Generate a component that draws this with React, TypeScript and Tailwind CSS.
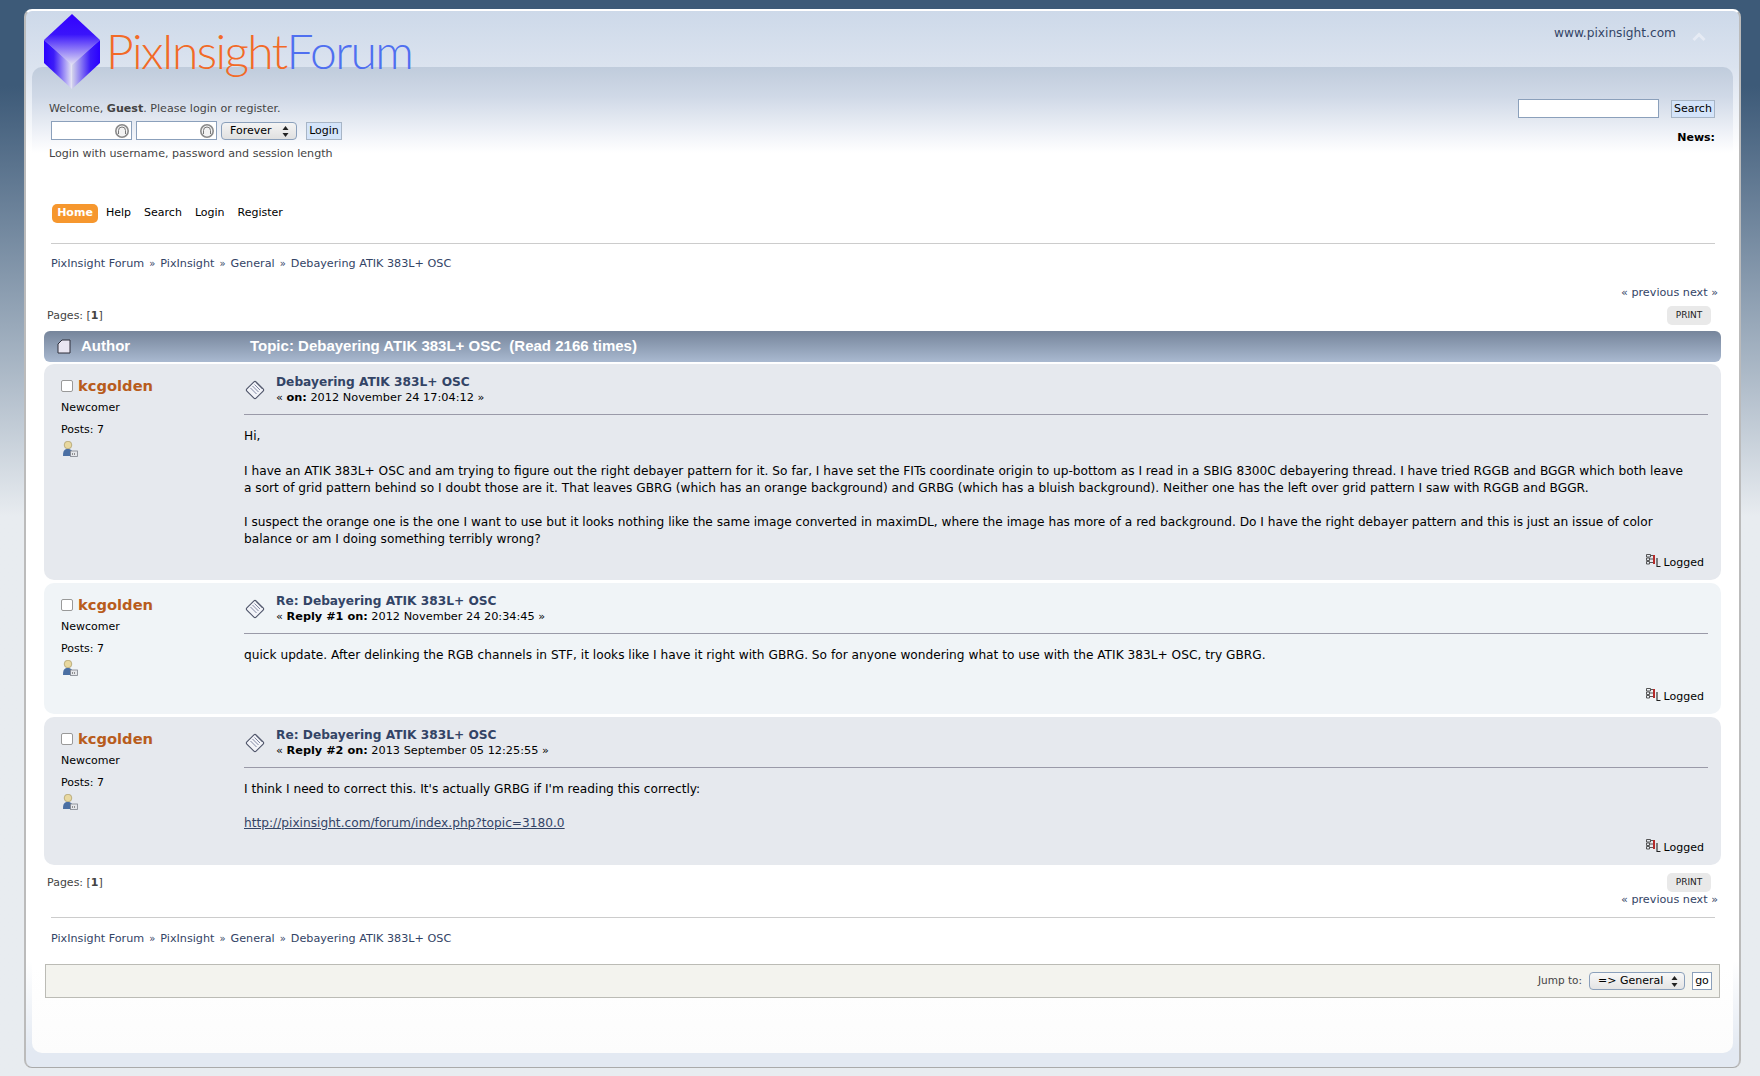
import React from 'react'

const posts = [
    {
        title: 'Debayering ATIK 383L+ OSC',
        label: 'on:',
        date: '2012 November 24 17:04:12',
        bg: 'bg-[#e6e9ee]',
        h: 'h-[216px]',
        body: (
            <>
                <p>Hi,</p>
                <p className="mt-[18px]">
                    I have an ATIK 383L+ OSC and am trying to figure out the right debayer pattern for it. So far, I have set the FITs coordinate origin to up-bottom as I read in a SBIG 8300C debayering thread. I have tried RGGB and BGGR which both leave a sort of grid pattern behind so I doubt those are it. That leaves GBRG (which has an orange background) and GRBG (which has a bluish background). Neither one has the left over grid pattern I saw with RGGB and BGGR.
                </p>
                <p className="mt-[17px]">
                    I suspect the orange one is the one I want to use but it looks nothing like the same image converted in maximDL, where the image has more of a red background. Do I have the right debayer pattern and this is just an issue of color balance or am I doing something terribly wrong?
                </p>
            </>
        ),
    },
    {
        title: 'Re: Debayering ATIK 383L+ OSC',
        label: 'Reply #1 on:',
        date: '2012 November 24 20:34:45',
        bg: 'bg-[#f0f4f7]',
        h: 'h-[131px]',
        body: (
            <p>
                quick update. After delinking the RGB channels in STF, it looks like I have it right with GBRG. So for anyone wondering what to use with the ATIK 383L+ OSC, try GBRG.
            </p>
        ),
    },
    {
        title: 'Re: Debayering ATIK 383L+ OSC',
        label: 'Reply #2 on:',
        date: '2013 September 05 12:25:55',
        bg: 'bg-[#e6e9ee]',
        h: 'h-[148px]',
        body: (
            <>
                <p>I think I need to correct this. It's actually GRBG if I'm reading this correctly:</p>
                <p className="mt-[17px]">
                    <a className="text-[#334466] underline">http://pixinsight.com/forum/index.php?topic=3180.0</a>
                </p>
            </>
        ),
    },
]

function Cube() {
    return (
        <svg width="57" height="75" viewBox="0 0 57 75" className="shrink-0">
            <defs>
                <linearGradient id="top" x1="0" y1="0" x2="0" y2="1">
                    <stop offset="0" stopColor="#3300ff" />
                    <stop offset="0.4" stopColor="#3a14fb" />
                    <stop offset="1" stopColor="#e4e2f4" />
                </linearGradient>
                <linearGradient id="left" x1="0" y1="0" x2="1" y2="0">
                    <stop offset="0" stopColor="#2a00ff" />
                    <stop offset="0.35" stopColor="#3c1cf8" />
                    <stop offset="1" stopColor="#e8e8f4" />
                </linearGradient>
                <linearGradient id="right" x1="1" y1="0" x2="0" y2="0">
                    <stop offset="0" stopColor="#2a00ff" />
                    <stop offset="0.35" stopColor="#3c1cf8" />
                    <stop offset="1" stopColor="#d4d4ec" />
                </linearGradient>
            </defs>
            <path d="M28 0 L56 26 L28 51 L0 26 Z" fill="url(#top)" />
            <path d="M0 26 L28 51 L28 75 L0 49 Z" fill="url(#left)" />
            <path d="M56 26 L28 51 L28 75 L56 49 Z" fill="url(#right)" />
        </svg>
    )
}

function OpenIdIcon() {
    return (
        <svg width="16" height="16" viewBox="0 0 16 16" className="absolute right-[2px] top-[2px]">
            <circle cx="8" cy="8" r="6.200" fill="#f2f2f2" stroke="#8a8a8a" strokeWidth="1.600" />
            <path d="M4.500 11 V7.500 a3.500 3.500 0 0 1 7 0 V11" fill="none" stroke="#777" strokeWidth="1" />
        </svg>
    )
}

function Arrows() {
    return (
        <svg width="7" height="11" viewBox="0 0 7 11" className="shrink-0">
            <path d="M3.500 0 L6.500 4 H0.500 Z M3.500 11 L0.500 7 H6.500 Z" fill="#222" />
        </svg>
    )
}

function PostIcon() {
    return (
        <svg width="22" height="22" viewBox="0 0 22 22" className="shrink-0">
            <rect x="4.500" y="4.500" width="13" height="13" rx="1.500" transform="rotate(45 11 11)" fill="#f3f4f9" stroke="#4f556a" strokeWidth="1.100" />
            <path d="M12 3.500 L18.500 10" fill="none" stroke="#4f556a" strokeWidth="1" />
            <path d="M6.500 9 L12.500 15 M8.500 7 L14.500 13 M10.500 5.500 L16 11" stroke="#8188a3" strokeWidth="1" />
        </svg>
    )
}

function ProfileIcon() {
    return (
        <svg width="16" height="16" viewBox="0 0 16 16" className="block">
            <circle cx="6" cy="4" r="3.800" fill="#e8d8a0" stroke="#a89a66" strokeWidth="0.700" />
            <path d="M1 15 C1 9.500 2.500 8 6 8 C9.500 8 11 10 11 15 Z" fill="#4a6fa3" />
            <rect x="8.500" y="10" width="7" height="5.500" fill="#e4e6ea" stroke="#7f838c" strokeWidth="0.800" />
            <path d="M10.500 12 V14 M12.500 12 V14" stroke="#777" strokeWidth="0.800" />
        </svg>
    )
}

function LoggedIcon() {
    return (
        <svg width="15" height="14" viewBox="0 0 15 14" className="mb-[3px] shrink-0">
            <path d="M0.500 0.500 H4.500 V3 H0.500 Z M0.500 4 H3.500 V6.500 H0.500 Z M0.500 7.500 H3.500 V10 H0.500 Z M5 1.500 H7 M4 5 H7 M4 8.500 H7" fill="none" stroke="#444" strokeWidth="0.900" />
            <rect x="7" y="1" width="2" height="9" fill="#b52a2a" />
            <path d="M11 4 V12.500 H14.500" fill="none" stroke="#222" strokeWidth="1.100" />
        </svg>
    )
}

function PrintButton() {
    return (
        <span className="flex h-[19px] w-[44px] items-center justify-center rounded-[5px] bg-[#e9e9e9] text-[9px] text-[#222]">
            PRINT
        </span>
    )
}

function Pages() {
    return (
        <span className="block pt-[1px] text-[11px] leading-[18px] text-[#444]">
            Pages: [<b>1</b>]
        </span>
    )
}

function Crumbs() {
    return (
        <div className="flex gap-[5px] pl-[6px] text-[11.200px] text-[#334466]">
            <span>PixInsight Forum</span>
            <span className="text-[10px] leading-[16px]">»</span>
            <span>PixInsight</span>
            <span className="text-[10px] leading-[16px]">»</span>
            <span>General</span>
            <span className="text-[10px] leading-[16px]">»</span>
            <span>Debayering ATIK 383L+ OSC</span>
        </div>
    )
}

function Post({ post }: { post: (typeof posts)[number] }) {
    return (
        <div className={`flex ${post.h} ${post.bg} mb-[3px] rounded-[10px]`}>
            <div className="w-[200px] shrink-0 pl-[17px] pt-[11px] text-[11px] text-black">
                <div className="flex items-center gap-[5px]">
                    <span className="h-[12px] w-[12px] rounded-[2px] border border-[#999] bg-white" />
                    <span className="text-[14.700px] font-bold leading-[22px] text-[#b85c1c]">kcgolden</span>
                </div>
                <p className="mt-[3px] leading-[16px]">Newcomer</p>
                <p className="mt-[6px] leading-[16px]">Posts: 7</p>
                <div className="ml-[1px] mt-[3px]">
                    <ProfileIcon />
                </div>
            </div>
            <div className="flex min-w-0 flex-1 flex-col pr-[13px] pt-[10px]">
                <div className="flex h-[41px] items-start border-b border-[#9a9aa8]">
                    <div className="mt-[5px] w-[32px]">
                        <PostIcon />
                    </div>
                    <div>
                        <p className="text-[12.200px] font-bold leading-[16px] text-[#334466]">{post.title}</p>
                        <p className="text-[11.300px] leading-[16px] text-black">
                            « <b>{post.label}</b> {post.date} »
                        </p>
                    </div>
                </div>
                <div className="mt-[13px] flex-1 pr-[15px] text-[12.180px] leading-[17px] text-black">{post.body}</div>
                <div className="flex items-end justify-end gap-[3px] pb-[9px] pr-[4px] text-[11px] text-black">
                    <LoggedIcon />
                    <span>Logged</span>
                </div>
            </div>
        </div>
    )
}

export default function App() {
    return (
        <div className="min-h-[1076px] bg-gradient-to-b from-[#3d5a78] from-[8%] to-[#e8ecf0] to-[48%] pb-[8px] pl-[24px] pr-[19px] pt-[9px] font-['DejaVu_Sans',sans-serif]">
            <div className="flex h-[1059px] flex-col rounded-[8px] border-2 border-b border-white border-b-[#aaa] border-l-[#bbb] border-r-[#bbb] bg-[linear-gradient(#cdd9e9,#dbe3ef_56px,#ffffff_140px,#ffffff_950px,#e3e9f2_1040px)]">
                {/* top strip with logo */}
                <div className="relative h-[56px] shrink-0">
                    <div className="absolute left-[18px] top-[3px] z-10 flex items-start gap-[5px]">
                        <Cube />
                        <div className="mt-[7px] whitespace-nowrap font-['Lato',sans-serif] text-[48px] font-light leading-[60px] tracking-[-1.650px]">
                            <span className="text-[#f26a27]">PixInsight</span>
                            <span className="text-[#4f6ff0]">Forum</span>
                        </div>
                    </div>
                    <div className="flex items-start justify-end pr-[33px] pt-[13px]">
                        <span className="text-[12.200px] text-[#334466]">www.pixinsight.com</span>
                        <svg width="14" height="10" viewBox="0 0 14 10" className="ml-[16px] mt-[8px]">
                            <path d="M1.500 8 L7 2.500 L12.500 8" fill="none" stroke="#e6ebf4" strokeWidth="3" />
                        </svg>
                    </div>
                </div>

                <div className="mx-[6px] mb-[14px] flex min-h-0 flex-1 flex-col rounded-[10px] bg-[linear-gradient(#c0ccdc,#d0d9e7_30px,#f4f6fa_72px,#ffffff_86px,#ffffff_900px,#fcfcfc)]">
                    <div className="flex h-[137px] shrink-0 justify-between pl-[17px] pr-[18px] pt-[34px]">
                        <div className="text-[11.100px] text-[#444]">
                            <p className="leading-[16px]">
                                Welcome, <b>Guest</b>. Please login or register.
                            </p>
                            <div className="ml-[2px] mt-[4px] flex items-end">
                                <div className="relative h-[19px] w-[81px]">
                                    <input className="h-full w-full border border-[#8ba0bb] bg-white" />
                                    <OpenIdIcon />
                                </div>
                                <div className="relative ml-[4px] h-[19px] w-[81px]">
                                    <input className="h-full w-full border border-[#8ba0bb] bg-white" />
                                    <OpenIdIcon />
                                </div>
                                <div className="ml-[4px] flex h-[18px] w-[76px] items-center justify-between rounded-[4px] border border-[#8ba0bb] bg-gradient-to-b from-[#f4f4f4] to-[#e0e0e0] pl-[8px] pr-[7px] text-[11px] text-black">
                                    <span>Forever</span>
                                    <Arrows />
                                </div>
                                <button className="ml-[9px] h-[18px] w-[36px] border border-[#a7b5c6] bg-[#d4e4fa] text-[11px] text-black">
                                    Login
                                </button>
                            </div>
                            <p className="mt-[6px] leading-[16px]">Login with username, password and session length</p>
                        </div>
                        <div className="-mt-[2px] flex flex-col items-end">
                            <div className="flex items-center">
                                <input className="h-[19px] w-[141px] border border-[#8ba0bb] bg-white" />
                                <button className="ml-[12px] h-[18px] w-[44px] border border-[#a7b5c6] bg-[#d4e4fa] text-[11px] text-black">
                                    Search
                                </button>
                            </div>
                            <b className="mt-[12px] text-[11px] leading-[16px] text-black">News:</b>
                        </div>
                    </div>

                    <div className="flex h-[19px] shrink-0 items-center pl-[20px] text-[11px] text-black">
                        <span className="flex h-[19px] w-[46px] items-center justify-center rounded-[5px] bg-[#f6972e] font-bold text-white">
                            Home
                        </span>
                        <span className="ml-[8px]">Help</span>
                        <span className="ml-[13px]">Search</span>
                        <span className="ml-[13px]">Login</span>
                        <span className="ml-[13px]">Register</span>
                    </div>

                    <div className="ml-[19px] mr-[18px] mt-[20px] h-px shrink-0 bg-[#cccccc]" />
                    <div className="mt-[12px] shrink-0 pl-[13px] leading-[16px]">
                        <Crumbs />
                    </div>

                    <div className="ml-[9px] mr-[13px] mt-[13px] shrink-0">
                        <div className="pr-[2px] text-right text-[11.200px] leading-[16px] text-[#334466]">« previous next »</div>
                        <div className="mt-[5px] flex items-center justify-between pl-[6px] pr-[9px]">
                            <Pages />
                            <PrintButton />
                        </div>
                        <div className="ml-[3px] mr-[-1px] mt-[6px]">
                            <div className="mb-[2px] flex h-[31px] items-center rounded-[6px] bg-gradient-to-b from-[#76859b] to-[#a9b9d0] font-['Liberation_Sans',sans-serif] text-[15px] font-bold text-white">
                                <svg width="14" height="15" viewBox="0 0 14 15" className="ml-[13px]">
                                    <path d="M5 1 H13 V14 H1 V5 Z" fill="#e9e6f2" stroke="#2e2e3a" strokeWidth="1" />
                                </svg>
                                <span className="ml-[10px] w-[169px]">Author</span>
                                <span>Topic: Debayering ATIK 383L+ OSC &nbsp;(Read 2166 times)</span>
                            </div>
                            {posts.map((post, i) => (
                                <Post key={i} post={post} />
                            ))}
                        </div>
                        <div className="flex h-[24px] items-end justify-between pl-[6px] pr-[9px]">
                            <Pages />
                            <PrintButton />
                        </div>
                        <div className="pr-[2px] text-right text-[11.200px] leading-[16px] text-[#334466]">« previous next »</div>
                    </div>

                    <div className="ml-[19px] mr-[18px] mt-[9px] h-px shrink-0 bg-[#cccccc]" />
                    <div className="mt-[13px] shrink-0 pl-[13px] leading-[16px]">
                        <Crumbs />
                    </div>

                    <div className="ml-[13px] mr-[13px] mt-[17px] flex h-[34px] shrink-0 items-center justify-end gap-[7px] border border-[#bbbbb5] bg-[#f3f3ee] pr-[7px] text-[10.500px] text-[#444]">
                        <span>Jump to:</span>
                        <div className="flex h-[18px] w-[96px] items-center justify-between rounded-[4px] border border-[#8ba0bb] bg-gradient-to-b from-[#f8f8f8] to-[#e4e4e4] pl-[8px] pr-[6px] text-[11px] text-black">
                            <span>=&gt; General</span>
                            <Arrows />
                        </div>
                        <button className="h-[18px] w-[20px] border border-[#8ba0bb] bg-white text-[11px] text-black">go</button>
                    </div>
                </div>
            </div>
        </div>
    )
}
